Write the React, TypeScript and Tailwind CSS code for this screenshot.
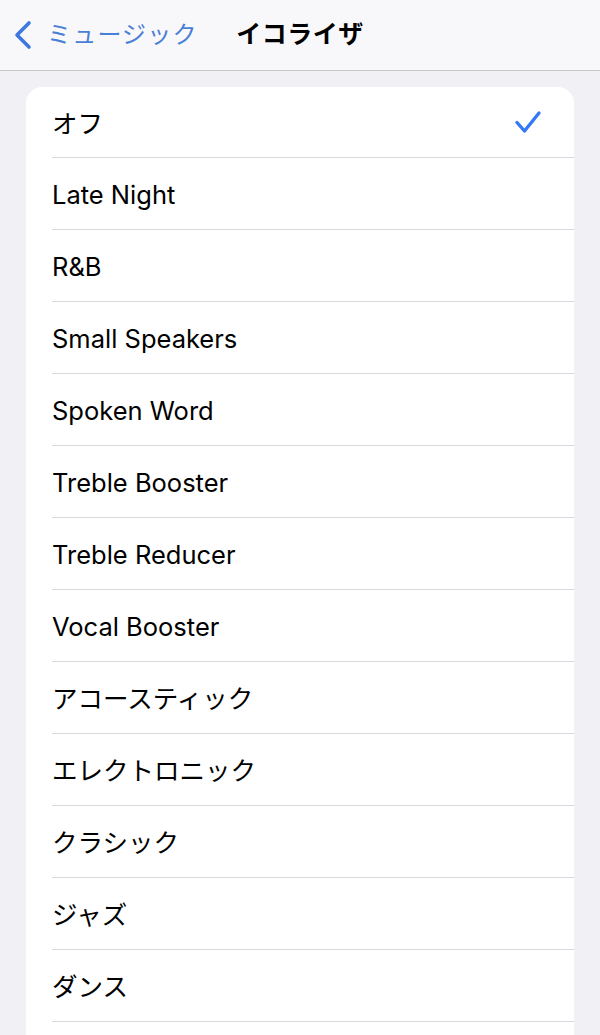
const items = [
  'オフ',
  'Late Night',
  'R&B',
  'Small Speakers',
  'Spoken Word',
  'Treble Booster',
  'Treble Reducer',
  'Vocal Booster',
  'アコースティック',
  'エレクトロニック',
  'クラシック',
  'ジャズ',
  'ダンス',
];

const font = { fontFamily: 'Inter, "Noto Sans CJK JP", sans-serif' };

export default function App() {
  return (
    <div className="h-[1035px] overflow-hidden bg-[#f0f0f5]" style={font}>
      {/* Nav bar */}
      <div className="relative flex h-[71px] items-center border-b border-[#c8c8cc] bg-[#f8f8fa]">
        <div className="flex items-center pl-[12px] text-[#4a7fd6]">
          <svg width="24" height="30" viewBox="0 0 24 30" fill="none">
            <path d="M17 3 L5 15 L17 27" stroke="#3b78e0" strokeWidth="3.6" strokeLinecap="round" strokeLinejoin="round" />
          </svg>
          <span className="ml-[11px] text-[24px] tracking-[1.2px]">ミュージック</span>
        </div>
        <div className="pointer-events-none absolute inset-x-0 text-center text-[25px] font-bold tracking-[0.5px] text-black">
          イコライザ
        </div>
      </div>

      {/* List */}
      <div className="mx-[26px] mt-[16px] overflow-hidden rounded-t-[16px] bg-white">
        {items.map((item, i) => (
          <div key={item} className="pl-[26px]">
            <div
              className={`flex items-center justify-between border-b border-[#d9d9dd] pr-[32px] ${
                i === 0 ? 'h-[71px]' : 'h-[72px]'
              }`}
            >
              <span className="mt-[4px] text-[25.5px] text-black">{item}</span>
              {i === 0 && (
                <svg width="28" height="24" viewBox="0 0 28 24" fill="none">
                  <path d="M3 12.5 L10.5 21 L25 3" stroke="#3478f6" strokeWidth="3.4" strokeLinecap="round" strokeLinejoin="round" />
                </svg>
              )}
            </div>
          </div>
        ))}
        <div className="h-[72px]" />
      </div>
    </div>
  );
}
